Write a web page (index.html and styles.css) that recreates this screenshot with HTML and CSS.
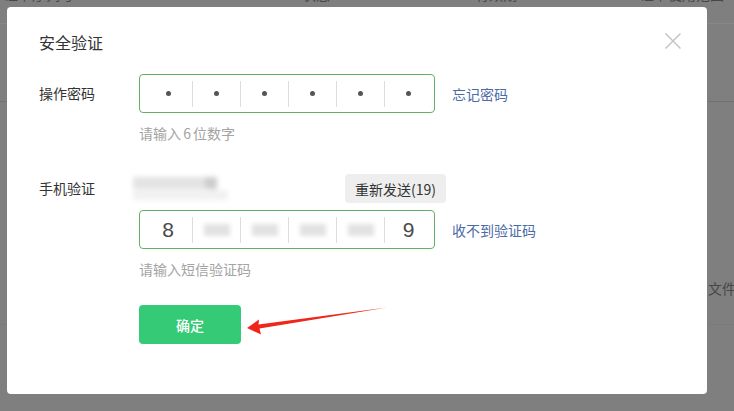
FILE: index.html
```html
<!DOCTYPE html>
<html lang="zh-CN">
<head>
    <meta charset="UTF-8">
    <title>安全验证</title>
    <link rel="stylesheet" href="styles.css">
</head>
<body>
<div class="page">
    <div class="page-head">
        <span class="col-a">证书序列号</span>
        <span class="col-b">状态</span>
        <span class="col-c">有效期</span>
        <span class="col-d">证书使用范围</span>
    </div>
    <div class="page-row row-1"></div>
    <div class="page-row row-2"><span class="file">文件</span></div>
</div>

<div class="dialog">
    <div class="dialog-head">
        <h3 class="dialog-title">安全验证</h3>
        <button class="close" type="button">
            <svg width="16" height="16" viewBox="0 0 16 16"><path d="M0.5 0.5 L15.5 15.5 M15.5 0.5 L0.5 15.5" stroke="#c4c4c4" stroke-width="1.5" fill="none"/></svg>
        </button>
    </div>

    <div class="form">
        <div class="form-row">
            <label class="form-label">操作密码</label>
            <div class="form-field">
                <div class="field-line">
                    <div class="code-box">
                        <span class="cell"><i class="dot"></i></span>
                        <span class="cell"><i class="dot"></i></span>
                        <span class="cell"><i class="dot"></i></span>
                        <span class="cell"><i class="dot"></i></span>
                        <span class="cell"><i class="dot"></i></span>
                        <span class="cell"><i class="dot"></i></span>
                    </div>
                    <a class="link">忘记密码</a>
                </div>
                <p class="hint">请输入 6 位数字</p>
            </div>
        </div>

        <div class="form-row">
            <label class="form-label label-phone">手机验证</label>
            <div class="form-field">
                <div class="phone-line">
                    <div class="phone-blur"><span class="pb-1"></span><span class="pb-2"></span><span class="pb-3"></span></div>
                    <button class="resend" type="button">重新发送(19)</button>
                </div>
                <div class="field-line sms-line">
                    <div class="code-box">
                        <span class="cell digit">8</span>
                        <span class="cell"><i class="smudge"></i></span>
                        <span class="cell"><i class="smudge"></i></span>
                        <span class="cell"><i class="smudge"></i></span>
                        <span class="cell"><i class="smudge"></i></span>
                        <span class="cell digit">9</span>
                    </div>
                    <a class="link">收不到验证码</a>
                </div>
                <p class="hint">请输入短信验证码</p>
            </div>
        </div>

        <div class="form-actions">
            <button class="btn-ok" type="button">确定</button>
        </div>
    </div>
</div>

<svg class="arrow" width="734" height="411" viewBox="0 0 734 411">
    <polygon points="247,328 259,319.5 258.5,324.5 387,307.5 259.5,328.5 261,334.5" fill="#f0261b"/>
</svg>
</body>
</html>
```

FILE: styles.css
```css
body {
    margin: 0;
    width: 734px;
    height: 411px;
    overflow: hidden;
    background-color: #7f7f7f;
    font-family: "Noto Sans CJK SC", "Liberation Sans", sans-serif;
    position: relative;
}

/* page behind the mask */
.page {
    color: #474747;
    font-size: 14px;
}
.page-head {
    display: flex;
    height: 4px;
    padding: 0 0 19px 4px;
    align-items: flex-end;
    border-bottom: 1px solid #888;
    line-height: 20px;
}
.col-a { width: 298px; }
.col-b { width: 173px; }
.col-c { width: 165px; }
.page-row {
    border-bottom: 1px solid #727272;
}
.row-1 { height: 77px; }
.row-2 {
    height: 196px;
    display: flex;
    align-items: flex-end;
    padding-bottom: 26px;
    padding-left: 708px;
    line-height: 20px;
    white-space: nowrap;
    border-bottom-color: #7b7b7b;
}

/* dialog */
.dialog {
    position: absolute;
    left: 7px;
    top: 7px;
    width: 700px;
    height: 387px;
    box-sizing: border-box;
    padding: 23px 32px 0;
    background-color: #fff;
    border-radius: 4px;
}
.dialog-head {
    display: flex;
    justify-content: space-between;
    align-items: center;
    height: 24px;
}
.dialog-title {
    margin: 0;
    font-size: 16px;
    font-weight: normal;
    line-height: 24px;
    color: #333;
}
.close {
    width: 16px;
    height: 16px;
    padding: 0;
    border: 0;
    margin-right: -6px;
    margin-top: -2px;
    background: none;
    display: block;
}
.close svg { display: block; }

.form {
    margin-top: 20px;
}
.form-row {
    display: flex;
}
.form-row + .form-row {
    margin-top: 31px;
}
.form-label {
    width: 100px;
    flex: none;
    font-size: 14px;
    line-height: 39px;
    color: #333;
}
.label-phone {
    line-height: 29px;
}
.field-line {
    display: flex;
    align-items: center;
}
.code-box {
    width: 296px;
    height: 39px;
    box-sizing: border-box;
    padding-left: 4px;
    border: 1px solid #62b262;
    border-radius: 4px;
    display: flex;
    align-items: center;
}
.cell {
    width: 48px;
    height: 26px;
    box-sizing: border-box;
    display: flex;
    align-items: center;
    justify-content: center;
}
.cell + .cell {
    border-left: 1px solid #ddd;
}
.dot {
    width: 5px;
    height: 5px;
    border-radius: 50%;
    background-color: #555;
}
.digit {
    font-family: "Liberation Sans", sans-serif;
    font-size: 21px;
    color: #4a4a4a;
}
.smudge {
    width: 26px;
    height: 12px;
    background-color: #e2e2e2;
    filter: blur(2px);
}
.link {
    margin-left: 17px;
    font-size: 14px;
    color: #4b6ba6;
    cursor: pointer;
}
.hint {
    margin: 10px 0 0;
    font-size: 14px;
    line-height: 20px;
    color: #a3a3a3;
    word-spacing: -1px;
}

.phone-line {
    display: flex;
    align-items: center;
    height: 29px;
}
.phone-blur {
    width: 95px;
    height: 24px;
    margin-left: -6px;
    display: flex;
    flex-wrap: wrap;
    filter: blur(2.5px);
}
.pb-1 { width: 72px; height: 12px; background-color: #e3e3e3; }
.pb-2 { width: 12px; height: 12px; background-color: #cdcdcd; }
.pb-3 { width: 95px; height: 10px; background-color: #f1f1f1; }
.resend {
    margin-left: 117px;
    height: 29px;
    padding: 0 10px;
    border: 0;
    border-radius: 4px;
    background-color: #eee;
    font-family: "Noto Sans CJK SC", "Liberation Sans", sans-serif;
    font-size: 14px;
    color: #333;
}
.sms-line {
    margin-top: 7px;
}

.form-actions {
    padding-left: 100px;
    margin-top: 26px;
}
.btn-ok {
    width: 102px;
    height: 39px;
    border: 0;
    border-radius: 4px;
    background-color: #35cb76;
    color: #fff;
    font-family: "Noto Sans CJK SC", sans-serif;
    font-size: 14px;
    font-weight: 500;
}

/* annotation drawn over the screenshot */
.arrow {
    position: absolute;
    left: 0;
    top: 0;
    pointer-events: none;
}
```
